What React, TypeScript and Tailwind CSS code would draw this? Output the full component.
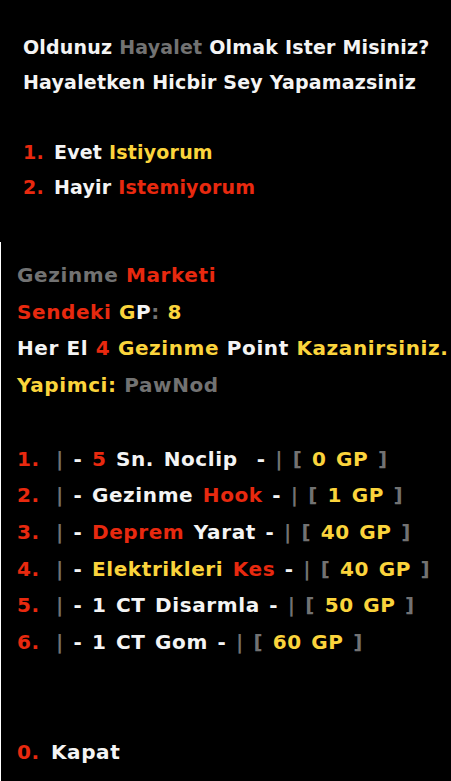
import React from 'react';

type Seg = [string, string];

const W = 'text-[#f4f4f4]';
const G = 'text-[#727272]';
const R = 'text-[#e8290f]';
const Y = 'text-[#fbd43c]';

const topLines: Seg[][] = [
  [[W, 'Oldunuz '], [G, 'Hayalet'], [W, ' Olmak Ister Misiniz?']],
  [[W, 'Hayaletken Hicbir Sey Yapamazsiniz']],
  [],
];

const topItems: { n: string; segs: Seg[] }[] = [
  { n: '1.', segs: [[W, 'Evet '], [Y, 'Istiyorum']] },
  { n: '2.', segs: [[W, 'Hayir '], [R, 'Istemiyorum']] },
];

const infoLines: Seg[][] = [
  [[G, 'Gezinme '], [R, 'Marketi']],
  [[R, 'Sendeki '], [Y, 'G'], [W, 'P'], [G, ': '], [Y, '8']],
  [[W, 'Her El '], [R, '4 '], [Y, 'Gezinme '], [W, 'Point '], [Y, 'Kazanirsiniz.']],
  [[Y, 'Yapimci: '], [G, 'PawNod']],
  [],
];

const marketItems: { n: string; segs: Seg[] }[] = [
  { n: '1.', segs: [[G, '| '], [W, '- '], [R, '5 '], [W, 'Sn. Noclip  - '], [G, '| [ '], [Y, '0 GP '], [G, ']']] },
  { n: '2.', segs: [[G, '| '], [W, '- Gezinme '], [R, 'Hook '], [W, '- '], [G, '| [ '], [Y, '1 GP '], [G, ']']] },
  { n: '3.', segs: [[G, '| '], [W, '- '], [R, 'Deprem '], [W, 'Yarat - '], [G, '| [ '], [Y, '40 GP '], [G, ']']] },
  { n: '4.', segs: [[G, '| '], [W, '- '], [Y, 'Elektrikleri '], [R, 'Kes '], [W, '- '], [G, '| [ '], [Y, '40 GP '], [G, ']']] },
  { n: '5.', segs: [[G, '| '], [W, '- 1 CT Disarmla - '], [G, '| [ '], [Y, '50 GP '], [G, ']']] },
  { n: '6.', segs: [[G, '| '], [W, '- 1 CT Gom - '], [G, '| [ '], [Y, '60 GP '], [G, ']']] },
];

function Line({ segs }: { segs: Seg[] }) {
  return (
    <div className="whitespace-pre">
      {segs.length === 0 ? '\u00a0' : segs.map(([c, t], i) => (
        <span key={i} className={c}>{t}</span>
      ))}
    </div>
  );
}

function Item({ n, segs, numW, spaced }: { n: string; segs: Seg[]; numW: string; spaced?: boolean }) {
  return (
    <div className={`flex whitespace-pre ${spaced ? '[word-spacing:2px]' : ''}`}>
      <span className={`${R} ${numW} shrink-0`}>{n}</span>
      <span>
        {segs.map(([c, t], i) => (
          <span key={i} className={c}>{t}</span>
        ))}
      </span>
    </div>
  );
}

export default function App() {
  return (
    <div
      className="w-[451px] h-[781px] bg-black flex flex-col overflow-hidden font-bold"
      style={{ fontFamily: '"DejaVu Sans", Verdana, sans-serif' }}
    >
      <div className="h-[242px] pt-[30px] pl-[23px] text-[19px] leading-[35px] tracking-[0.2px] shrink-0">
        {topLines.map((l, i) => <Line key={i} segs={l} />)}
        {topItems.map((it) => <Item key={it.n} n={it.n} segs={it.segs} numW="w-[31px]" />)}
      </div>
      <div className="flex-1 border-l border-white pt-[15px] pl-[16px] text-[20px] leading-[36.7px] tracking-[0.6px]">
        {infoLines.map((l, i) => <Line key={i} segs={l} />)}
        {marketItems.map((it) => <Item key={it.n} n={it.n} segs={it.segs} numW="w-[39px]" spaced />)}
        <Line segs={[]} />
        <Line segs={[]} />
        <Item n="0." segs={[[W, 'Kapat']]} numW="w-[34px]" />
      </div>
    </div>
  );
}
